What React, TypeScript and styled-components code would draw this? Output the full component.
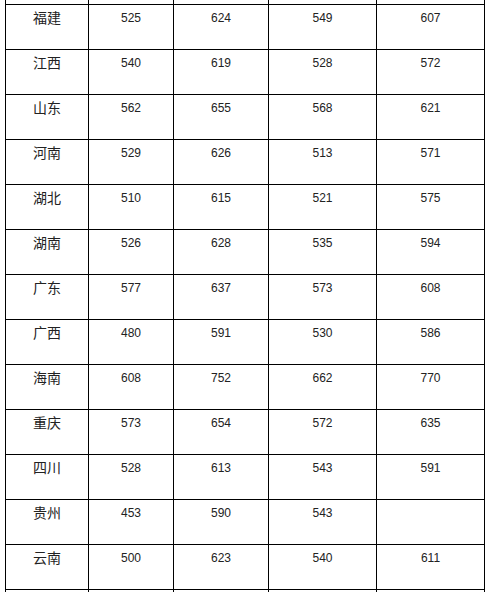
import React from "react";
import styled, { createGlobalStyle } from "styled-components";

const GlobalStyle = createGlobalStyle`
  html, body {
    margin: 0;
    padding: 0;
    background: #ffffff;
  }
`;

const Viewport = styled.div`
  width: 492px;
  height: 592px;
  overflow: hidden;
  background: #ffffff;
`;

const Sheet = styled.div`
  display: grid;
  grid-template-columns: 83px 85px 95px 108px 108px;
  grid-auto-rows: 45px;
  width: max-content;
  margin-left: 5px;
  margin-top: -41px;
  border-left: 1px solid #000;
  border-top: 1px solid #000;
`;

const Cell = styled.div<{ $name?: boolean }>`
  box-sizing: border-box;
  border-right: 1px solid #000;
  border-bottom: 1px solid #000;
  padding-top: ${(p) => (p.$name ? "2px" : "3px")};
  text-align: center;
  line-height: 20px;
  color: #222;
  font-family: ${(p) =>
    p.$name
      ? `"Noto Sans CJK SC", "Noto Sans", sans-serif`
      : `"Liberation Sans", Arial, sans-serif`};
  font-size: ${(p) => (p.$name ? "14px" : "12px")};
`;

type Row = [string, string, string, string, string];

const rows: Row[] = [
  ["", "", "", "", ""],
  ["福建", "525", "624", "549", "607"],
  ["江西", "540", "619", "528", "572"],
  ["山东", "562", "655", "568", "621"],
  ["河南", "529", "626", "513", "571"],
  ["湖北", "510", "615", "521", "575"],
  ["湖南", "526", "628", "535", "594"],
  ["广东", "577", "637", "573", "608"],
  ["广西", "480", "591", "530", "586"],
  ["海南", "608", "752", "662", "770"],
  ["重庆", "573", "654", "572", "635"],
  ["四川", "528", "613", "543", "591"],
  ["贵州", "453", "590", "543", ""],
  ["云南", "500", "623", "540", "611"],
  ["", "", "", "", ""],
];

const App: React.FC = () => {
  return (
    <Viewport>
      <GlobalStyle />
      <Sheet>
        {rows.map((row, i) =>
          row.map((value, j) => (
            <Cell key={`${i}-${j}`} $name={j === 0}>
              {value}
            </Cell>
          ))
        )}
      </Sheet>
    </Viewport>
  );
};

export default App;
